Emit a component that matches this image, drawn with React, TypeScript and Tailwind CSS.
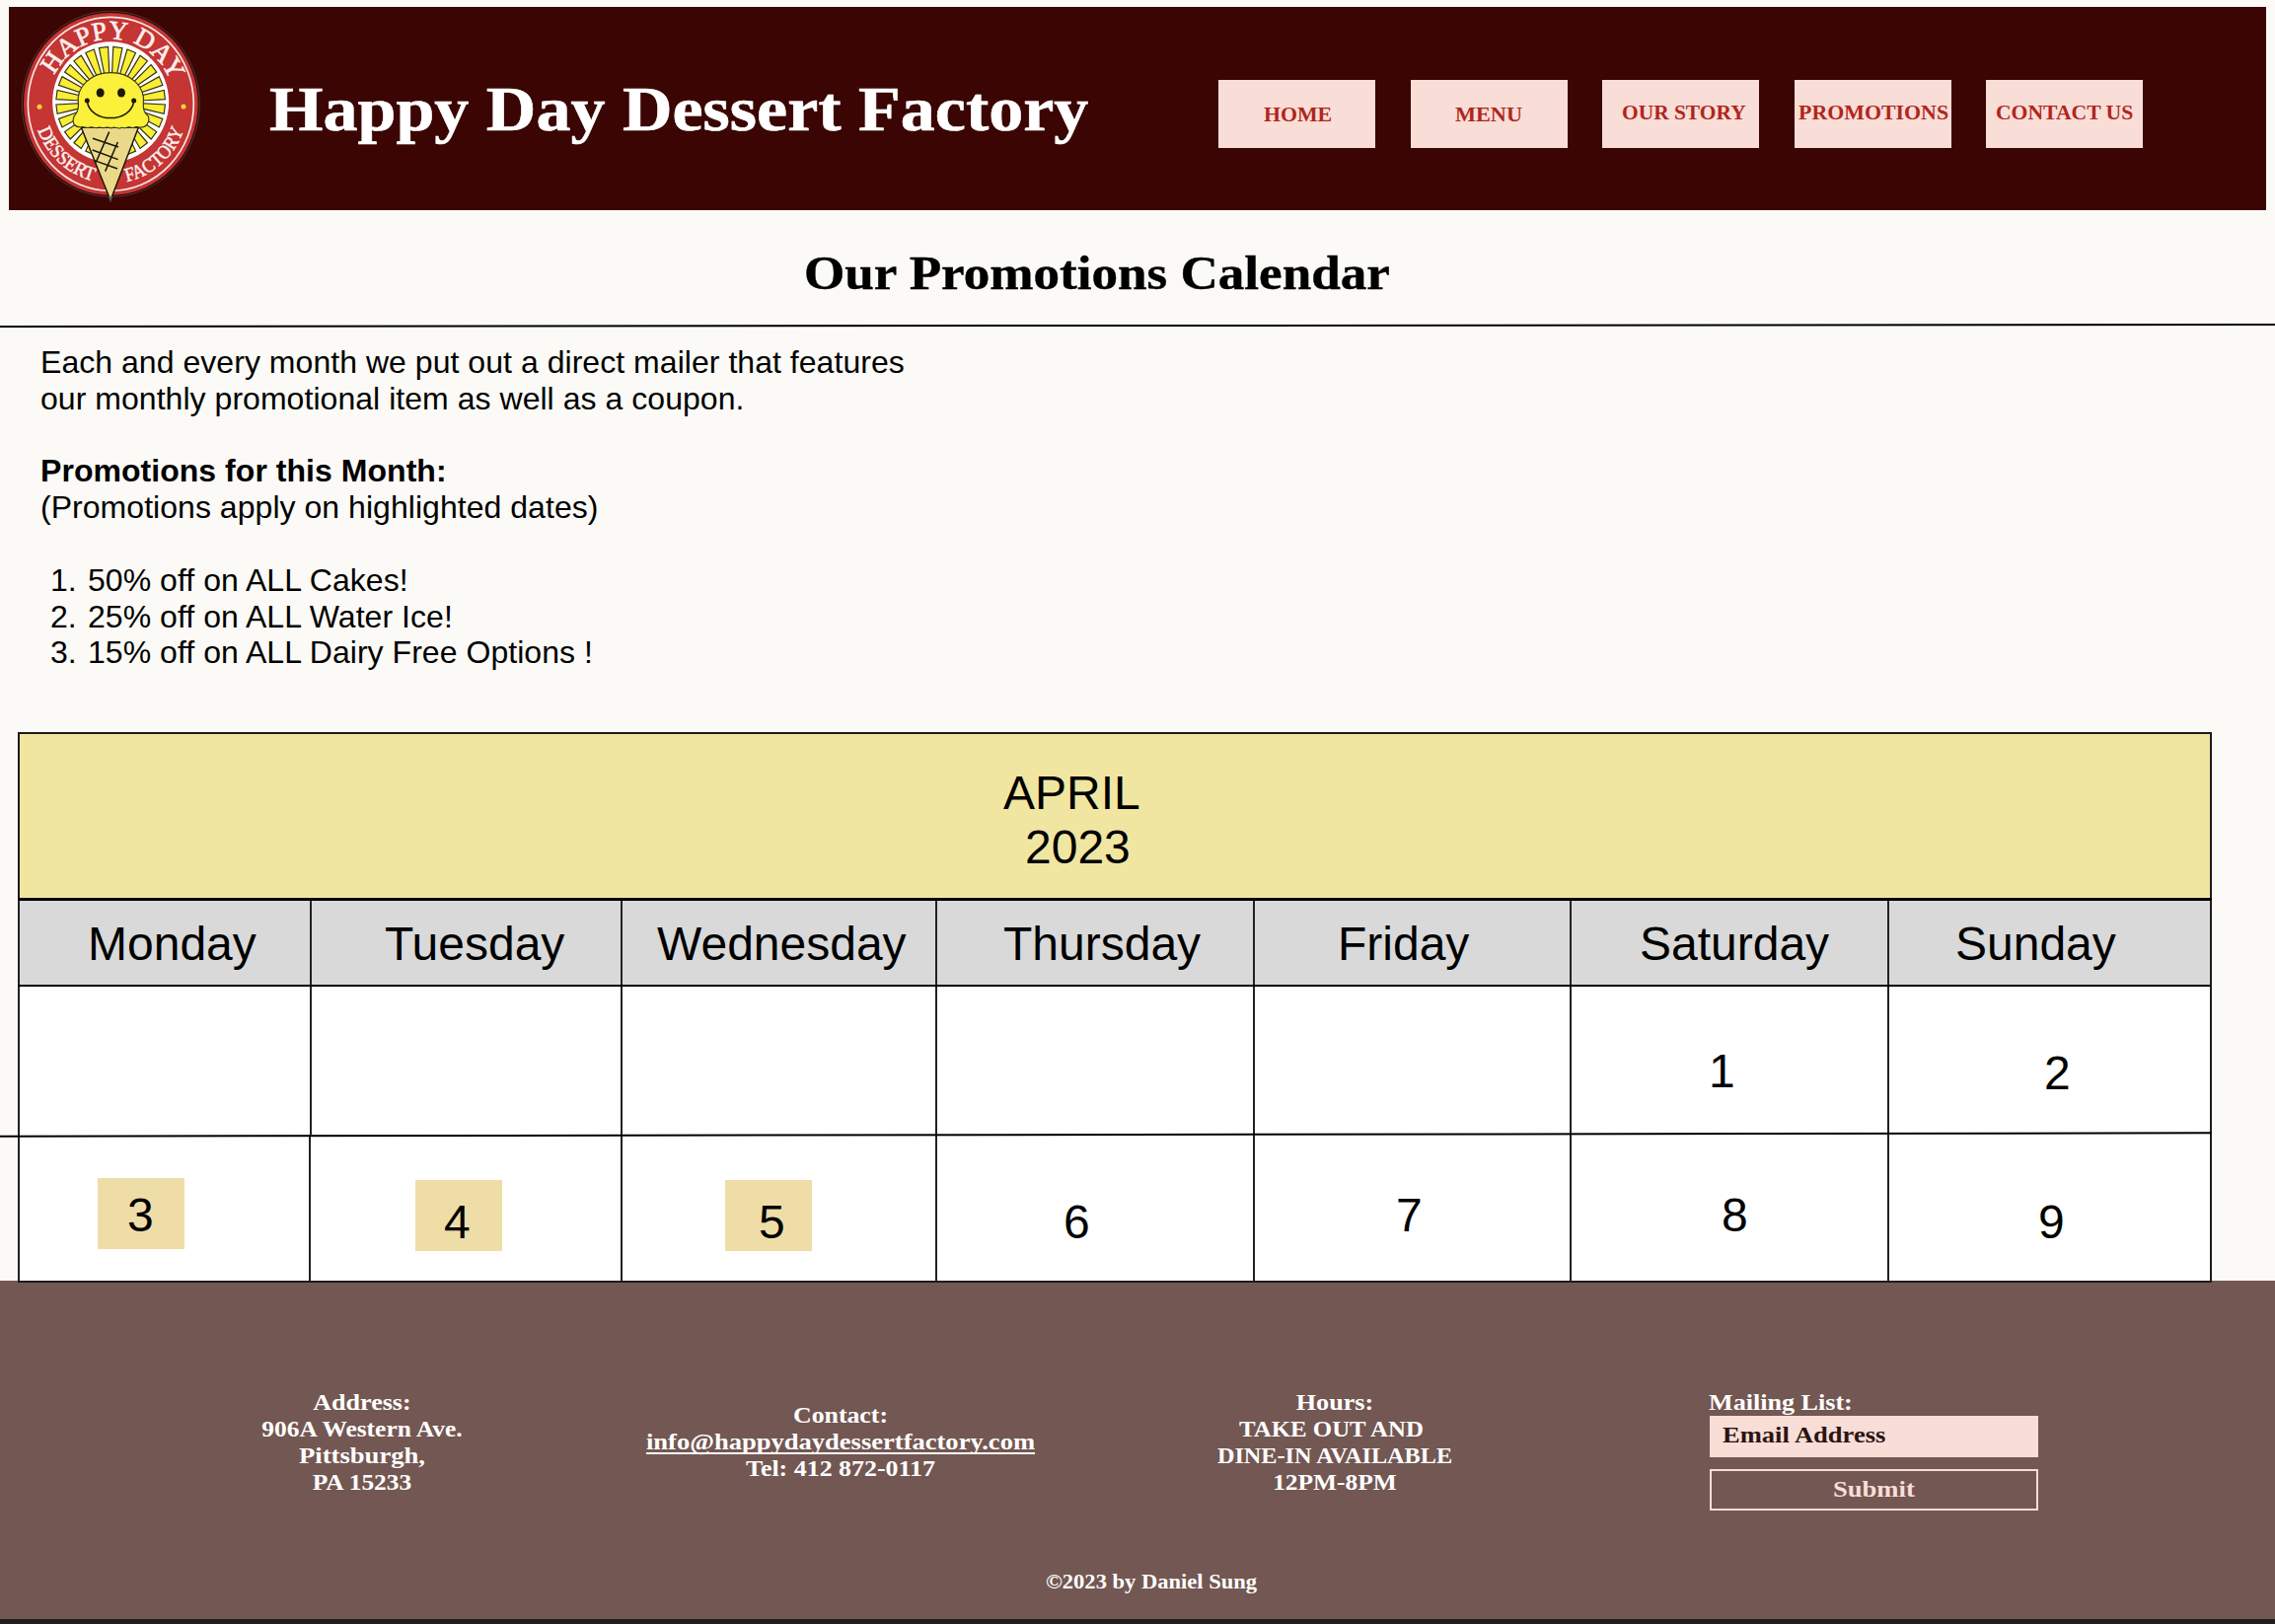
import React from "react";

const serif = "font-['Liberation_Serif',serif] font-bold";

const navItems = [
  { label: "HOME", cls: "ml-0 pl-[46px] pt-[23px]", text: "scale-x-[1.04]" },
  { label: "MENU", cls: "ml-[36px] pl-[45px] pt-[23px]", text: "scale-x-[1.06]" },
  { label: "OUR STORY", cls: "ml-[35px] pl-[20px] pt-[21px]", text: "scale-x-[1.02]" },
  { label: "PROMOTIONS", cls: "ml-[36px] pl-[4px] pt-[21px]", text: "scale-x-[1.043]" },
  { label: "CONTACT US", cls: "ml-[35px] pl-[10px] pt-[21px]", text: "scale-x-[1.03]" },
];

const weekdays = [
  { label: "Monday", cls: "border-l-2 pl-[69px]" },
  { label: "Tuesday", cls: "border-l-2 pl-[74px]" },
  { label: "Wednesday", cls: "border-l-2 pl-[35px]" },
  { label: "Thursday", cls: "border-l-2 pl-[67px]" },
  { label: "Friday", cls: "border-l-2 pl-[84px]" },
  { label: "Saturday", cls: "border-l-2 pl-[69px]" },
  { label: "Sunday", cls: "border-l-2 pl-[67px]" },
];

const firstWeek = [
  { day: "", cls: "border-l-2" },
  { day: "", cls: "border-l-2" },
  { day: "", cls: "border-l-2" },
  { day: "", cls: "border-l-2" },
  { day: "", cls: "border-l-2" },
  { day: "1", cls: "border-l-2 pl-[139px] pt-[58px]" },
  { day: "2", cls: "border-l-2 pl-[157px] pt-[60px]" },
];

const secondWeek = [
  { day: "3", cls: "border-l-2 pl-[79px] pt-[44px]", mark: "bg-[#EFDDA7] w-[88px] h-[72px] pl-[30px] pt-[10px]" },
  { day: "4", cls: "border-l-2 pl-[106px] pt-[46px]", mark: "bg-[#EFDDA7] w-[88px] h-[72px] pl-[29px] pt-[15px]" },
  { day: "5", cls: "border-l-2 pl-[104px] pt-[46px]", mark: "bg-[#EFDDA7] w-[88px] h-[72px] pl-[34px] pt-[15px]" },
  { day: "6", cls: "border-l-2 pl-[128px] pt-[61px]", mark: "" },
  { day: "7", cls: "border-l-2 pl-[143px] pt-[54px]", mark: "" },
  { day: "8", cls: "border-l-2 pl-[152px] pt-[54px]", mark: "" },
  { day: "9", cls: "border-l-2 pl-[151px] pt-[61px]", mark: "" },
];

const rayAngles = Array.from({ length: 24 }, (_, i) => 7.5 + i * 15);

function rayPoints(angle: number) {
  const cx = 276.5;
  const cy = 286;
  const at = (deg: number, rx: number, ry: number) => {
    const a = (deg * Math.PI) / 180;
    return `${(cx + rx * Math.sin(a)).toFixed(1)},${(cy - ry * Math.cos(a)).toFixed(1)}`;
  };
  return [
    at(angle - 4.8, 166, 168),
    at(angle + 4.8, 166, 168),
    at(angle + 4.8, 90, 86),
    at(angle - 4.8, 90, 86),
  ].join(" ");
}

function Logo() {
  return (
    <svg viewBox="0 0 558 600" className="h-[200px] w-[186px] shrink-0">
      <defs>
        <path id="arcTop" d="M 86.5 290 A 190 194 0 0 1 468.5 290" />
        <path id="arcLeft" d="M 46 340 A 238 243 0 0 0 252 531" />
        <path id="arcRight" d="M 300 533 A 238 243 0 0 0 506 345" />
      </defs>
      <ellipse cx="277" cy="292" rx="270" ry="282" fill="#2a0907" stroke="#7c6462" strokeWidth="1.5" />
      <ellipse cx="277" cy="292" rx="265" ry="277" fill="#C43533" />
      <ellipse cx="277" cy="292" rx="252" ry="264" fill="none" stroke="#F7E9E7" strokeWidth="5" />
      <ellipse cx="276.5" cy="286" rx="177" ry="183" fill="#FFFFFF" />
      {rayAngles.map((a) => (
        <polygon key={a} points={rayPoints(a)} fill="#F9EE35" stroke="#33310f" strokeWidth="3.5" />
      ))}
      <path
        d="M 187 364 L 361 364 L 276 585 Z"
        fill="#EBD98A"
        stroke="#1c180c"
        strokeWidth="4.5"
        strokeLinejoin="round"
      />
      <path d="M 269 574 L 276 592 L 283 574 Z" fill="#5c5654" />
      <path
        d="M 178 290 C 172 240 216 197 277 197 C 338 197 382 240 376 290 C 375 305 377 318 388 326 C 397 336 392 360 372 363 C 362 366 356 358 350 363 C 340 368 334 360 328 363 C 318 369 312 361 306 365 C 298 369 290 361 284 364 C 276 369 268 360 260 364 C 250 368 244 360 238 364 C 228 368 222 360 214 363 C 204 368 196 360 188 362 C 166 364 158 350 165 330 C 176 318 180 306 178 290 Z"
        fill="#FBF03A"
        stroke="#3b3812"
        strokeWidth="3.5"
      />
      <ellipse cx="245" cy="258" rx="12" ry="13.5" fill="#1a1806" />
      <ellipse cx="309" cy="258" rx="12" ry="13.5" fill="#1a1806" />
      <path d="M 205 283 C 213 352 339 352 347 283" fill="none" stroke="#1a1806" strokeWidth="4.5" />
      <circle cx="205" cy="282" r="7.5" fill="#1a1806" />
      <circle cx="347" cy="282" r="7.5" fill="#1a1806" />
      <path
        d="M 272 377 L 232 469 M 298 408 L 260 497 M 222 397 L 300 423 M 221 432 L 299 461 M 227 464 L 297 489"
        fill="none"
        stroke="#1a1608"
        strokeWidth="4.5"
      />
      <circle cx="60" cy="301" r="7.5" fill="#F5D63C" />
      <circle cx="498" cy="300" r="7.5" fill="#F5D63C" />
      <g fill="#FBEFED" stroke="#FBEFED" strokeWidth="2" fontFamily="'Liberation Serif', serif">
        <text fontSize="80">
          <textPath href="#arcTop" startOffset="88" textLength="448" lengthAdjust="spacingAndGlyphs">
            HAPPY DAY
          </textPath>
        </text>
        <text fontSize="59" strokeWidth="1.5">
          <textPath href="#arcLeft" startOffset="32" textLength="238" lengthAdjust="spacingAndGlyphs">
            DESSERT
          </textPath>
        </text>
        <text fontSize="59" strokeWidth="1.5">
          <textPath href="#arcRight" startOffset="26" textLength="244" lengthAdjust="spacingAndGlyphs">
            FACTORY
          </textPath>
        </text>
      </g>
    </svg>
  );
}

export default function App() {
  return (
    <div className="flex h-[1646px] w-[2306px] flex-col overflow-hidden bg-[#FBFAF6] font-['Liberation_Sans',sans-serif] text-black">
      <header className="ml-[9px] mt-[7px] flex h-[206px] w-[2288px] shrink-0 items-start bg-[#3A0502] pl-[11px] pt-[1px]">
        <Logo />
        <h1 className={`${serif} ml-[67px] w-[962px] whitespace-nowrap pt-[67px] text-[64px] leading-[72px] text-white`}>
          <span className="inline-block origin-left scale-x-[1.094] [-webkit-text-stroke:0.6px_white]">Happy Day Dessert Factory</span>
        </h1>
        <nav className="mt-[73px] flex">
          {navItems.map((n) => (
            <a
              key={n.label}
              className={`${serif} block h-[69px] w-[159px] whitespace-nowrap bg-[#F9DDD7] text-[21px] leading-[24px] text-[#B0261C] ${n.cls}`}
            >
              <span className={`inline-block origin-left ${n.text}`}>{n.label}</span>
            </a>
          ))}
        </nav>
      </header>

      <h2 className={`${serif} h-[116px] shrink-0 whitespace-nowrap pl-[815px] pt-[37px] text-[48px] leading-[54px]`}>
        <span className="inline-block origin-left scale-x-[1.106] [-webkit-text-stroke:0.4px_black]">Our Promotions Calendar</span>
      </h2>
      <div className="h-[2px] w-full shrink-0 -skew-y-[0.05deg] bg-black" />

      <section className="h-[411px] shrink-0 pl-[41px] pt-[18px] text-[32px] leading-[36.8px] tracking-[0.04px]">
        <p className="w-[900px]">
          Each and every month we put out a direct mailer that features
          <br />
          our monthly promotional item as well as a coupon.
        </p>
        <p className="pt-[36.8px] font-bold">Promotions for this Month:</p>
        <p>(Promotions apply on highlighted dates)</p>
        <ol className="pt-[36.8px]">
          {["50% off on ALL Cakes!", "25% off on ALL Water Ice!", "15% off on ALL Dairy Free Options !"].map((t, i) => (
            <li key={t} className="flex">
              <span className="w-[48px] pl-[10px]">{i + 1}.</span>
              <span className="whitespace-pre">{t}</span>
            </li>
          ))}
        </ol>
      </section>

      <section className="relative z-10 h-[558px] shrink-0 pl-[18px]">
        <div className="h-[558px] w-[2224px] border-2 border-[#1c1c1c] bg-white text-[48px] leading-[55.2px]">
          <div className="h-[166px] bg-[#F0E6A1] pt-[32px]">
            <div className="pl-[997px]">APRIL</div>
            <div className="pl-[1019px]">2023</div>
          </div>
          <div className="-mx-[2px] h-[3px] bg-black" />
          <div className="-ml-[2px] grid h-[87px] grid-cols-[296px_315px_319px_322px_321px_322px_327px] border-b-2 border-black bg-[#D9D9D9]">
            {weekdays.map((d) => (
              <div key={d.label} className={`border-[#222] pt-[16px] ${d.cls}`}>
                {d.label}
              </div>
            ))}
          </div>
          <div className="-ml-[2px] grid h-[150px] grid-cols-[296px_315px_319px_322px_321px_322px_327px]">
            {firstWeek.map((d, i) => (
              <div key={i} className={`border-[#222] ${d.cls}`}>
                {d.day}
              </div>
            ))}
          </div>
          <div className="-ml-[2px] grid h-[148px] grid-cols-[295px_316px_319px_322px_321px_322px_327px]">
            {secondWeek.map((d, i) => (
              <div key={i} className={`border-[#222] ${d.cls}`}>
                <div className={d.mark}>{d.day}</div>
              </div>
            ))}
          </div>
        </div>
        <div className="absolute left-0 top-[407px] h-[2px] w-[2241px] -skew-y-[0.084deg] bg-black" />
      </section>

      <footer className={`${serif} -mt-[2px] flex h-[343px] shrink-0 flex-col bg-[#735752] text-[24px] leading-[27.2px] text-white`}>
        <div className="flex h-[293px] items-start whitespace-nowrap text-center">
          <address className="ml-[256.5px] w-[220px] pt-[109.5px] not-italic">
            <div className="scale-x-[1.085]">Address:</div>
            <div className="scale-x-[1.06]">906A Western Ave.</div>
            <div className="scale-x-[1.11]">Pittsburgh,</div>
            <div className="scale-x-[1.06]">PA 15233</div>
          </address>
          <div className="ml-[165px] w-[420px] pt-[123px]">
            <div className="scale-x-[1.075]">Contact:</div>
            <div className="scale-x-[1.106]">
              <a className="underline decoration-2 underline-offset-[3px] [text-decoration-skip-ink:none]">info@happydaydessertfactory.com</a>
            </div>
            <div className="scale-x-[1.08]">Tel: 412 872-0117</div>
          </div>
          <div className="ml-[161px] w-[260px] pt-[109.5px]">
            <div className="scale-x-[1.09]">Hours:</div>
            <div className="-ml-[7px] scale-x-[1.035]">TAKE OUT AND</div>
            <div className="scale-x-[1.01]">DINE-IN AVAILABLE</div>
            <div className="scale-x-[1.06]">12PM-8PM</div>
          </div>
          <div className="ml-[249.5px] w-[335px] pt-[109.5px] text-left">
            <div className="origin-left scale-x-[1.088]">Mailing List:</div>
            <div className="ml-[1px] h-[42px] w-[333px] bg-[#F9DDD7] pl-[13px] pt-[6px] text-[#2A1411]">
              <span className="inline-block origin-left scale-x-[1.105]">Email Address</span>
            </div>
            <button className="ml-[1px] mt-[12.5px] block h-[42px] w-[333px] border-2 border-[#F9DDD7] pb-[1px] text-center text-[#F9DDD7]">
              <span className="inline-block scale-x-[1.11]">Submit</span>
            </button>
          </div>
        </div>
        <div className="whitespace-nowrap pl-[1060px] text-[21px] leading-[24px]">
          <span className="inline-block origin-left scale-x-[1.073]">©2023 by Daniel Sung</span>
        </div>
      </footer>
      <div className="h-[5px] shrink-0 bg-[#1E1E1E]" />
    </div>
  );
}
